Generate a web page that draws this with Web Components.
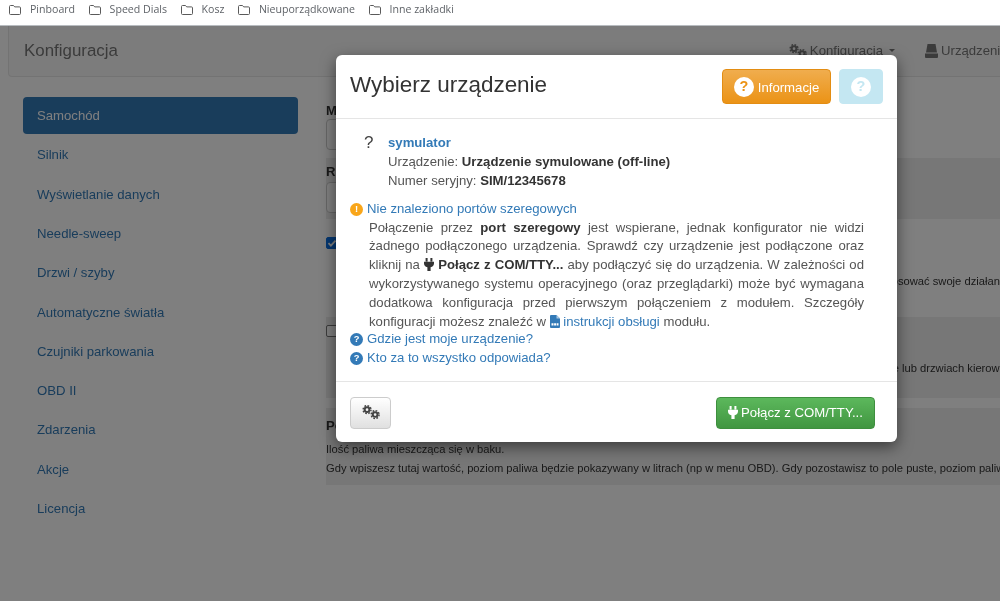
<!DOCTYPE html>
<html lang="pl">
<head>
<meta charset="utf-8">
<title>Konfiguracja</title>
<style>
html, body { margin: 0; padding: 0; height: 100%; overflow: hidden; background: #fff; }
body { font: 13.16px/18.8px "Liberation Sans", Arial, sans-serif; color: #333; filter: blur(.5px); }
</style>
</head>
<body>
<bookmark-bar>
    <bookmark-item>Pinboard</bookmark-item>
    <bookmark-item>Speed Dials</bookmark-item>
    <bookmark-item>Kosz</bookmark-item>
    <bookmark-item>Nieuporządkowane</bookmark-item>
    <bookmark-item>Inne zakładki</bookmark-item>
</bookmark-bar>
<app-page>
    <top-nav></top-nav>
    <page-columns>
        <side-nav slot="side">
            <side-item active>Samochód</side-item>
            <side-item>Silnik</side-item>
            <side-item>Wyświetlanie danych</side-item>
            <side-item>Needle-sweep</side-item>
            <side-item>Drzwi / szyby</side-item>
            <side-item>Automatyczne światła</side-item>
            <side-item>Czujniki parkowania</side-item>
            <side-item>OBD II</side-item>
            <side-item>Zdarzenia</side-item>
            <side-item>Akcje</side-item>
            <side-item>Licencja</side-item>
        </side-nav>
        <form-pane></form-pane>
    </page-columns>
    <device-modal slot="modal"></device-modal>
</app-page>

<script>
// small svg pieces used by several elements
const COGS = (size, color) => `<svg width="${size}" height="${size * 0.8}" viewBox="0 0 20 16" style="display:block">
    <g fill="none" stroke="${color}">
        <circle cx="5.6" cy="5.2" r="2.6" stroke-width="2.2"/>
        <circle cx="5.6" cy="5.2" r="4.4" stroke-width="1.6" stroke-dasharray="1.9 1.55"/>
        <circle cx="14.6" cy="10.6" r="2.6" stroke-width="2.2"/>
        <circle cx="14.6" cy="10.6" r="4.4" stroke-width="1.6" stroke-dasharray="1.9 1.55"/>
    </g></svg>`;
const PLUG = (w, color) => `<svg width="${w}" height="${w * 1.3}" viewBox="0 0 10 13" style="display:block">
    <path fill="${color}" d="M1.6 0h2v3.400h-2zM6.400 0h2v3.400h-2zM0 3.800h10v1.800c0 1.900-1.400 3.300-3.400 3.600V13H3.400V9.200C1.400 8.900 0 7.500 0 5.600z"/></svg>`;
const PDF = `<svg width="10" height="13" viewBox="0 0 10 13" style="display:block">
    <path fill="#337ab7" d="M1 0h5.500L10 3.500V12a1 1 0 0 1-1 1H1a1 1 0 0 1-1-1V1a1 1 0 0 1 1-1z"/>
    <path fill="#a9c8e4" d="M6.500 0L10 3.500H6.500z"/>
    <path fill="none" stroke="#fff" stroke-width="2.200" stroke-dasharray="2 .6" d="M1.500 9.400h7"/></svg>`;

class BookmarkBar extends HTMLElement {
    constructor() {
        super();
        this.attachShadow({ mode: "open" }).innerHTML = `
        <style>
        :host { display: flex; align-items: center; height: 25px; padding-left: 9px; gap: 13.5px; background: #fff; border-bottom: 1px solid #b8bcc0; }
        </style><slot></slot>`;
    }
}
customElements.define("bookmark-bar", BookmarkBar);

class BookmarkItem extends HTMLElement {
    constructor() {
        super();
        this.attachShadow({ mode: "open" }).innerHTML = `
        <style>
        :host { display: flex; align-items: center; gap: 9px; font: 10.6px/14px "Open Sans", sans-serif; color: #5f6368; padding-bottom: 7px; }
        svg { display: block; margin-top: 1px; }
        </style>
        <svg width="12" height="10" viewBox="0 0 12 10"><path fill="none" stroke="#5a5a5a" stroke-width="1" d="M.5 1.500a1 1 0 0 1 1-1h3l1.200 1.400h4.800a1 1 0 0 1 1 1v5.600a1 1 0 0 1-1 1h-9a1 1 0 0 1-1-1z"/></svg>
        <span><slot></slot></span>`;
    }
}
customElements.define("bookmark-item", BookmarkItem);

class AppPage extends HTMLElement {
    constructor() {
        super();
        this.attachShadow({ mode: "open" }).innerHTML = `
        <style>
        :host { display: flex; flex-direction: column; position: relative; height: 575px; overflow: hidden; background: #fff; }
        .backdrop { position: absolute; inset: 0; background: rgba(0, 0, 0, .5); }
        .dialog { position: absolute; left: 336px; top: 29px; width: 561px; }
        </style>
        <slot></slot>
        <div class="backdrop"></div>
        <div class="dialog"><slot name="modal"></slot></div>`;
    }
}
customElements.define("app-page", AppPage);

class TopNav extends HTMLElement {
    constructor() {
        super();
        this.attachShadow({ mode: "open" }).innerHTML = `
        <style>
        :host { display: flex; align-items: center; flex: none; height: 50px; margin: 0 -40px 0 8px; padding: 0 0 0 15px; background: #f8f8f8; border: 1px solid #e7e7e7; border-top: 0; border-radius: 0 0 4px 4px; }
        .brand { font-size: 16.9px; color: #777; flex: 1; }
        .link { display: flex; align-items: center; gap: 3px; color: #777; margin-right: 30px; white-space: nowrap; }
        .link svg { flex: none; }
        .caret { width: 0; height: 0; margin-left: 3px; border: 3.500px solid transparent; border-top-color: #777; border-bottom: 0; }
        </style>
        <div class="brand">Konfiguracja</div>
        <div class="link">${COGS(18, "#777")}<span>Konfiguracja</span><i class="caret"></i></div>
        <div class="link" style="margin-right:0;width:114px">
            <svg width="13" height="14" viewBox="0 0 13 14"><path fill="#777" d="M2.500 0h8l1.500 8.500H1zM0 9.500h13V13a1 1 0 0 1-1 1H1a1 1 0 0 1-1-1z"/></svg>
            <span>Urządzenie</span>
        </div>`;
    }
}
customElements.define("top-nav", TopNav);

class PageColumns extends HTMLElement {
    constructor() {
        super();
        this.attachShadow({ mode: "open" }).innerHTML = `
        <style>
        :host { display: flex; flex: 1; gap: 28px; padding: 20px 0 0 23px; min-height: 0; }
        </style>
        <slot name="side"></slot><slot></slot>`;
    }
}
customElements.define("page-columns", PageColumns);

class SideNav extends HTMLElement {
    constructor() {
        super();
        this.attachShadow({ mode: "open" }).innerHTML = `
        <style>
        :host { display: flex; flex-direction: column; gap: 2.300px; flex: none; width: 275px; }
        </style><slot></slot>`;
    }
}
customElements.define("side-nav", SideNav);

class SideItem extends HTMLElement {
    constructor() {
        super();
        this.attachShadow({ mode: "open" }).innerHTML = `
        <style>
        :host { display: flex; align-items: center; box-sizing: border-box; height: 37px; padding: 2px 0 0 14px; border-radius: 4px; color: #337ab7; }
        :host([active]) { background: #337ab7; color: #fff; }
        </style><slot></slot>`;
    }
}
customElements.define("side-item", SideItem);

class FormPane extends HTMLElement {
    constructor() {
        super();
        this.attachShadow({ mode: "open" }).innerHTML = `
        <style>
        :host { display: block; flex: 1; min-width: 0; overflow: hidden; margin-right: -10px; white-space: nowrap; }
        .row { box-sizing: border-box; }
        .even { background: #eee; }
        b { display: block; color: #333; line-height: 17px; }
        small { display: block; font-size: 11.2px; line-height: 18.8px; color: #333; }
        .input { height: 31px; width: 400px; box-sizing: border-box; background: #fff; border: 1px solid #ccc; border-radius: 4px; }
        .check { display: block; width: 12px; height: 12px; box-sizing: border-box; border: 1px solid #767676; border-radius: 2px; background: #fff; }
        .check.on { background: #0b6fe0; border-color: #0b6fe0; }
        .check svg { display: block; }
        </style>
        <div class="row" style="height:61px;padding-top:5px"><b>Model</b><div class="input"></div></div>
        <div class="row even" style="height:61px;padding-top:5px"><b>Rocznik</b><div class="input" style="margin-top:2px"></div></div>
        <div class="row" style="height:98px;padding-top:18px">
            <span class="check on"><svg width="10" height="10" viewBox="0 0 10 10"><path fill="none" stroke="#fff" stroke-width="1.800" d="M1.500 5.200l2.400 2.400 4.600-5"/></svg></span>
            <small style="margin-top:23px;padding-left:131px">Dzięki tej opcji urządzenie rozpoznaje rodzaj samochodu i potrafi dzięki temu lepiej dostosować swoje działanie</small>
        </div>
        <div class="row even" style="height:81px;padding-top:8px">
            <span class="check"></span>
            <small style="margin-top:22px;padding-left:91px">Gdy zaznaczysz tę opcję, urządzenie będzie reagować na otwarcie drzwi przy włączonym świetle lub drzwiach kierowcy</small>
        </div>
        <div class="row" style="height:10px"></div>
        <div class="row even" style="height:77px;padding-top:9px">
            <b>Pojemność baku</b>
            <small style="margin-top:6px">Ilość paliwa mieszcząca się w baku.</small>
            <small>Gdy wpiszesz tutaj wartość, poziom paliwa będzie pokazywany w litrach (np w menu OBD). Gdy pozostawisz to pole puste, poziom paliwa</small>
        </div>`;
    }
}
customElements.define("form-pane", FormPane);

class RoundIcon extends HTMLElement {
    constructor() {
        super();
        this.attachShadow({ mode: "open" }).innerHTML = `
        <style>
        :host { display: inline-flex; align-items: center; justify-content: center; flex: none; width: var(--size, 13px); height: var(--size, 13px); border-radius: 50%; background: var(--bg, #337ab7); color: var(--fg, #fff); font: bold calc(var(--size, 13px) * .72)/1 "Liberation Sans", sans-serif; }
        </style><slot></slot>`;
    }
}
customElements.define("round-icon", RoundIcon);

class HelpLine extends HTMLElement {
    constructor() {
        super();
        this.attachShadow({ mode: "open" }).innerHTML = `
        <style>
        :host { display: flex; align-items: center; gap: 4px; color: #337ab7; }
        </style><slot></slot>`;
    }
}
customElements.define("help-line", HelpLine);

class ModalButton extends HTMLElement {
    constructor() {
        super();
        this.attachShadow({ mode: "open" }).innerHTML = `
        <style>
        :host { display: flex; align-items: center; justify-content: center; box-sizing: border-box; gap: 3px; border-radius: 4px; border: 1px solid #ccc; background: linear-gradient(#fff, #e0e0e0); color: #333; }
        :host([kind=warning]) { background: linear-gradient(#f0ad4e, #eb9316); border-color: #e38d13; color: #fff; }
        :host([kind=success]) { background: linear-gradient(#5cb85c, #419641); border-color: #3e8f3e; color: #fff; }
        :host([kind=info]) { background: #c4e7f2; border-color: #c4e7f2; }
        </style><slot></slot>`;
    }
}
customElements.define("modal-button", ModalButton);

class DeviceModal extends HTMLElement {
    constructor() {
        super();
        this.attachShadow({ mode: "open" }).innerHTML = `
        <style>
        :host { display: flex; flex-direction: column; background: #fff; border-radius: 6px; box-shadow: 0 5px 15px rgba(0, 0, 0, .5); }
        header { display: flex; align-items: center; height: 63px; padding: 0 14px; border-bottom: 1px solid #e5e5e5; }
        h1 { flex: 1; margin: 0 0 4px; font-size: 22.47px; font-weight: normal; line-height: 30px; color: #333; }
        .head-buttons { display: flex; gap: 8px; }
        .btn-info { width: 109px; height: 35px; --size: 20px; --bg: #fff; --fg: #eb9316; gap: 4px; }
        .btn-info span { padding-top: 4px; }
        .btn-help { width: 44px; height: 35px; --size: 20px; --bg: #fff; --fg: #c4e7f2; }
        .body { padding: 15px 14px 12.5px; }
        .device { display: flex; padding-left: 14px; margin-bottom: 9.5px; }
        .mark { width: 24px; font-size: 17px; color: #444; }
        .name { color: #337ab7; font-weight: bold; }
        .lead { color: #555; }
        b { color: #333; }
        p { margin: 0 19px -1px; text-align: justify; color: #555; }
        p a { color: #337ab7; }
        .glyph { display: inline-block; vertical-align: -2px; }
        footer { display: flex; justify-content: space-between; padding: 15px 22px 13px 14px; border-top: 1px solid #e5e5e5; }
        .btn-settings { width: 41px; height: 32px; }
        .btn-connect { width: 159px; height: 32px; }
        .btn-connect span { padding-top: 1px; }
        </style>
        <header>
            <h1>Wybierz urządzenie</h1>
            <div class="head-buttons">
                <modal-button kind="warning" class="btn-info"><round-icon>?</round-icon><span>Informacje</span></modal-button>
                <modal-button kind="info" class="btn-help"><round-icon>?</round-icon></modal-button>
            </div>
        </header>
        <div class="body">
            <div class="device">
                <div class="mark">?</div>
                <div>
                    <div class="name">symulator</div>
                    <div class="lead">Urządzenie: <b>Urządzenie symulowane (off-line)</b></div>
                    <div class="lead">Numer seryjny: <b>SIM/12345678</b></div>
                </div>
            </div>
            <help-line><round-icon style="--bg:#f9a61a">!</round-icon><span>Nie znaleziono portów szeregowych</span></help-line>
            <p>Połączenie przez <b>port szeregowy</b> jest wspierane, jednak konfigurator nie widzi żadnego podłączonego urządzenia. Sprawdź czy urządzenie jest podłączone oraz kliknij na <span class="glyph">${PLUG(10, "#333")}</span> <b>Połącz z COM/TTY...</b> aby podłączyć się do urządzenia. W zależności od wykorzystywanego systemu operacyjnego (oraz przeglądarki) może być wymagana dodatkowa konfiguracja przed pierwszym połączeniem z modułem. Szczegóły konfiguracji możesz znaleźć w <span class="glyph">${PDF}</span> <a>instrukcji obsługi</a> modułu.</p>
            <help-line><round-icon>?</round-icon><span>Gdzie jest moje urządzenie?</span></help-line>
            <help-line><round-icon>?</round-icon><span>Kto za to wszystko odpowiada?</span></help-line>
        </div>
        <footer>
            <modal-button class="btn-settings">${COGS(18, "#444")}</modal-button>
            <modal-button kind="success" class="btn-connect">${PLUG(10, "#fff")}<span>Połącz z COM/TTY...</span></modal-button>
        </footer>`;
    }
}
customElements.define("device-modal", DeviceModal);
</script>
</body>
</html>
